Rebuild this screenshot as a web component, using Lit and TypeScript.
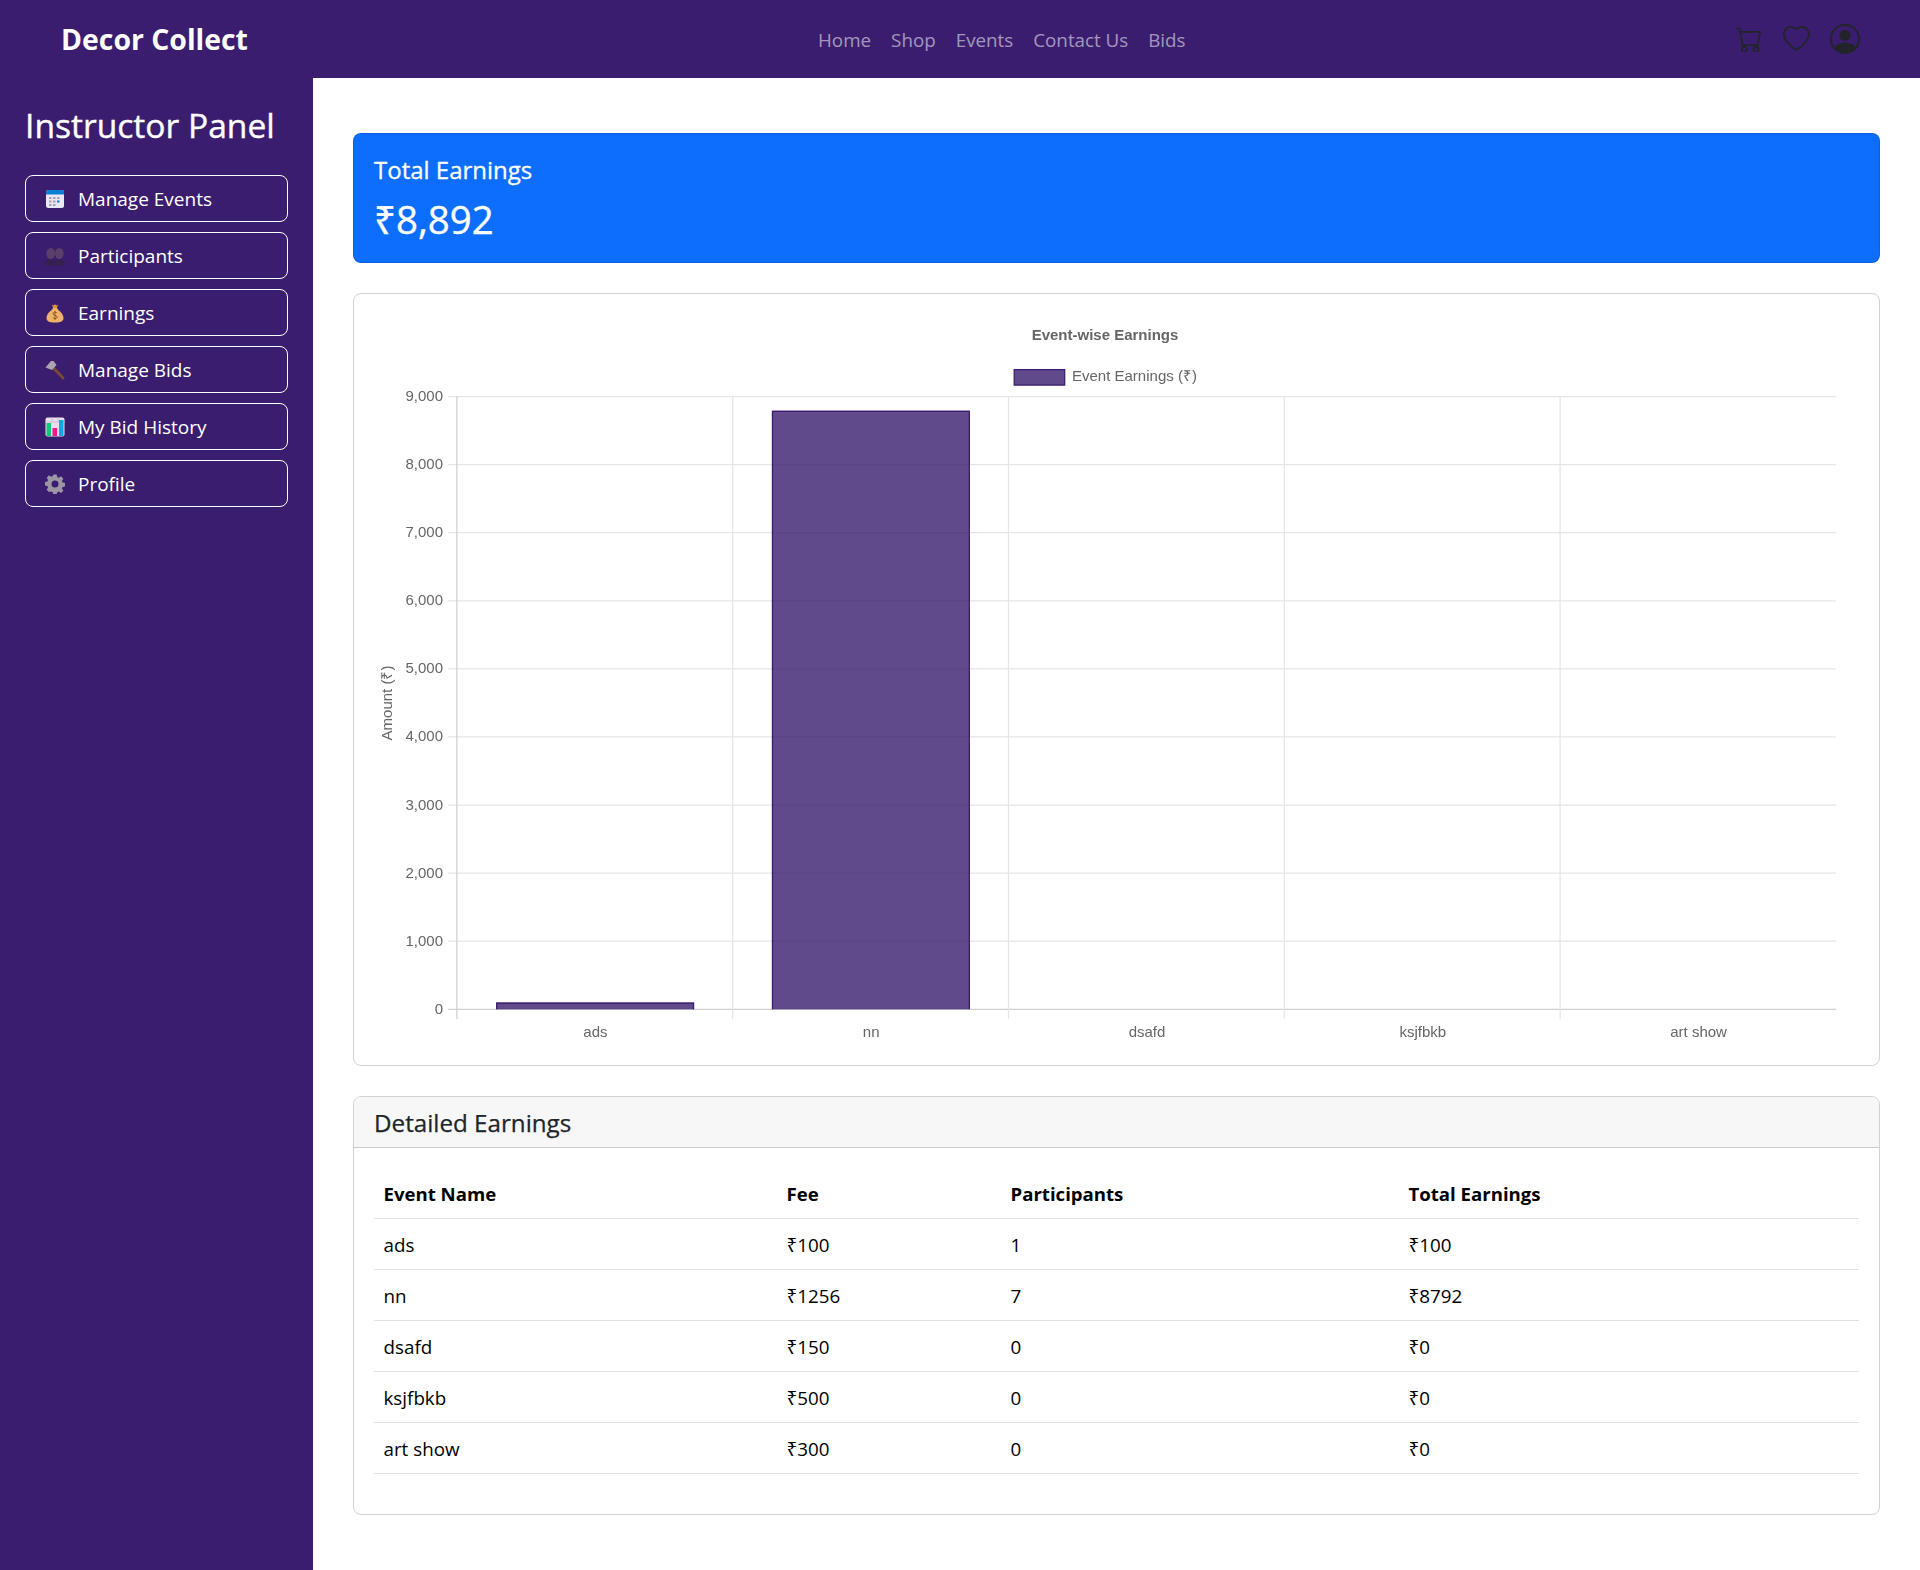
import { LitElement, html, svg, css } from 'lit';
import { customElement } from 'lit/decorators.js';

const PURPLE = '#3a1d6e';

const rows = [
  { name: 'ads', fee: 100, participants: 1, total: 100 },
  { name: 'nn', fee: 1256, participants: 7, total: 8792 },
  { name: 'dsafd', fee: 150, participants: 0, total: 0 },
  { name: 'ksjfbkb', fee: 500, participants: 0, total: 0 },
  { name: 'art show', fee: 300, participants: 0, total: 0 },
];

const icons = {
  calendar: svg`<rect x="1" y="1" width="18" height="18" rx="2.5" fill="#ece8f2"/>
    <path d="M1 5.500V3.500A2.500 2.500 0 0 1 3.500 1h13A2.500 2.500 0 0 1 19 3.500V5.500z" fill="#0a80d2"/>
    <g fill="#a5a1b4">
      <rect x="4" y="8" width="2.500" height="2"/><rect x="8" y="8" width="2.500" height="2"/><rect x="12" y="8" width="2.500" height="2"/>
      <rect x="4" y="11.500" width="2.500" height="2"/><rect x="8" y="11.500" width="2.500" height="2"/>
      <rect x="4" y="15" width="2.500" height="2"/><rect x="8" y="15" width="2.500" height="2"/>
    </g>
    <rect x="12" y="11.500" width="2.500" height="2" fill="#0a80d2"/>`,
  people: svg`<g fill="#5b3f68">
      <ellipse cx="5.700" cy="7.500" rx="4.300" ry="5.500"/><ellipse cx="14.300" cy="7.500" rx="4.300" ry="5.500"/>
    </g>
    <path d="M0 19.500v-2c0-2.500 2.200-3.800 5.700-4.300 1.700.3 3.100.8 4.300 1.600 1.200-.8 2.600-1.300 4.300-1.600 3.500.5 5.700 1.800 5.700 4.300v2z" fill="#35204f"/>`,
  bag: svg`<path d="M7 1.500l1.500 1 1.500-1.200 1.500 1.200 1.500-1-1 3.500H8z" fill="#d8963c"/>
    <path d="M8 5h4c1 2.500 6.500 5 6.500 10 0 3.300-2.500 4.500-8.500 4.500S1.500 18.300 1.500 15C1.500 10 7 7.500 8 5z" fill="#eeb26a"/>
    <path d="M12 10.200c-.4-.8-1.100-1.100-2-1.100-1.100 0-2 .6-2 1.600 0 2.200 4.100 1.200 4.100 3.300 0 1-.9 1.600-2.100 1.600-1 0-1.800-.4-2.200-1.200M10 8v9" fill="none" stroke="#8d5a1e" stroke-width="1"/>`,
  hammer: svg`<path d="M7 8.500l2-2 10 10.500a1.400 1.400 0 0 1-2 2z" fill="#7b4a33"/>
    <path d="M0.500 7.500L6 1h2.500L11.500 5 7 10z" fill="#a9a4ae"/>`,
  chart: svg`<rect x="0.500" y="0.500" width="19" height="19" rx="2" fill="#e6e0ec"/>
    <path d="M0.500 5h19M7 0.500v5M13 0.500v5" stroke="#c9c2d3" stroke-width="1"/>
    <rect x="1.500" y="6" width="4.500" height="13" fill="#10c878"/>
    <rect x="7.500" y="11" width="4.500" height="8" fill="#f5158c"/>
    <rect x="14" y="3" width="4.500" height="16" fill="#12a6e8"/>`,
  gear: svg`<path fill="#9b95a6" fill-rule="evenodd" d="M8.300.500h3.400l.5 2.600 1.600.7 2.200-1.500 2.400 2.400-1.500 2.200.7 1.600 2.600.5v3.400l-2.600.5-.7 1.600 1.500 2.200-2.400 2.400-2.200-1.500-1.600.7-.5 2.600H8.300l-.5-2.600-1.600-.7L4 18.100l-2.400-2.400 1.500-2.200-.7-1.600L-.2 11.400V8l2.600-.5.7-1.600L1.600 3.700 4 1.300l2.200 1.500 1.600-.7zM10 6.500a3.500 3.500 0 1 0 0 7 3.500 3.500 0 0 0 0-7z"/>`,
};

const sideItems = [
  { label: 'Manage Events', icon: icons.calendar },
  { label: 'Participants', icon: icons.people },
  { label: 'Earnings', icon: icons.bag },
  { label: 'Manage Bids', icon: icons.hammer },
  { label: 'My Bid History', icon: icons.chart },
  { label: 'Profile', icon: icons.gear },
];

// chart geometry, in page coordinates (the svg viewBox starts at the card corner)
const LEFT = 456.9;
const RIGHT = 1835.9;
const TOP = 396.5;
const ZERO = 1009.3;
const STEP = (RIGHT - LEFT) / rows.length;
const yFor = (v: number) => ZERO - ((ZERO - TOP) * v) / 9000;

function chart() {
  const ticks = [0, 1000, 2000, 3000, 4000, 5000, 6000, 7000, 8000, 9000];
  return html`<svg class="chart" viewBox="354 294 1525 771">
    ${ticks.map((t) => svg`
      <line x1="448" x2=${RIGHT} y1=${yFor(t)} y2=${yFor(t)} stroke=${t === 0 ? '#cfcfcf' : '#e6e6e6'} stroke-width="1.25"/>
      <text x="443" y=${yFor(t) + 4.5} text-anchor="end" class="tick">${t.toLocaleString('en-US')}</text>`)}
    ${rows.map((_, i) => svg`
      <line x1=${LEFT + STEP * i} x2=${LEFT + STEP * i} y1=${TOP} y2="1019" stroke=${i === 0 ? '#cfcfcf' : '#e6e6e6'} stroke-width="1.25"/>`)}
    ${rows.map((r, i) => {
      const x = LEFT + STEP * i + 39.2;
      const y = yFor(r.total);
      return r.total === 0 ? '' : svg`
        <rect x=${x} y=${y} width="198" height=${ZERO - y} fill="rgba(58,29,110,.8)"/>
        <path d="M${x + 0.6} ${ZERO}V${y + 0.6}H${x + 197.4}V${ZERO}" fill="none" stroke=${PURPLE} stroke-width="1.25"/>`;
    })}
    ${rows.map((r, i) => svg`
      <text x=${LEFT + STEP * (i + 0.5) + 0.6} y="1037" text-anchor="middle" class="tick">${r.name}</text>`)}
    <text x="1105" y="340" text-anchor="middle" class="title">Event-wise Earnings</text>
    <rect x="1014.200" y="369.600" width="50.500" height="15.500" fill="rgba(58,29,110,.8)" stroke=${PURPLE} stroke-width="1.25"/>
    <text x="1072" y="381" class="tick">Event Earnings (₹)</text>
    <text transform="translate(392 703) rotate(-90)" text-anchor="middle" class="tick">Amount (₹)</text>
  </svg>`;
}

@customElement('app-root')
export class AppRoot extends LitElement {
  static styles = css`
    :host {
      display: flex;
      flex-direction: column;
      min-height: 100vh;
      font-family: 'Open Sans', 'Noto Sans', sans-serif;
      font-size: 18.8px;
      color: #000;
      background: #fff;
    }
    .navbar {
      display: grid;
      grid-template-columns: 747px auto 1fr;
      align-items: center;
      height: 78px;
      padding: 0 60px 0 61px;
      background: #3a1d6e;
    }
    .brand {
      font-size: 28.4px;
      font-weight: 700;
      color: #fff;
    }
    .links {
      display: flex;
      gap: 20px;
      padding: 2px 0 0 10px;
      color: rgba(255, 255, 255, 0.55);
    }
    .actions {
      display: flex;
      justify-content: flex-end;
      align-items: center;
      gap: 20.5px;
      color: #212529;
    }
    .actions svg {
      display: block;
      width: 26.7px;
      height: 26.7px;
      fill: currentColor;
    }
    .actions svg.person {
      width: 30px;
      height: 30px;
    }
    .body {
      display: flex;
      flex: 1;
    }
    .sidebar {
      width: 313px;
      flex: none;
      box-sizing: border-box;
      padding: 26px 25px 0;
      background: #3a1d6e;
      color: #fff;
    }
    .sidebar h3 {
      margin: 0 0 29px;
      font-size: 33.6px;
      font-weight: 400;
      line-height: 42px;
      -webkit-text-stroke: 0.4px #fff;
    }
    .side-list {
      display: flex;
      flex-direction: column;
      gap: 10px;
    }
    .side-btn {
      display: flex;
      align-items: center;
      gap: 13px;
      height: 47px;
      box-sizing: border-box;
      padding-left: 19px;
      border: 1px solid #fff;
      border-radius: 8px;
      font-size: 19px;
    }
    .side-btn svg {
      width: 20px;
      height: 20px;
      flex: none;
    }
    .main {
      flex: 1;
      min-width: 0;
      padding: 55px 40px 0;
    }
    .total {
      height: 130px;
      box-sizing: border-box;
      padding: 21px 20px 0;
      margin-bottom: 30px;
      background: #0d6efd;
      border: 1px solid rgba(0, 0, 0, 0.125);
      border-radius: 8px;
      color: #fff;
    }
    .total h5 {
      margin: 0 0 10px;
      font-size: 24px;
      font-weight: 400;
      line-height: 30px;
      -webkit-text-stroke: 0.3px #fff;
    }
    .total h2 {
      margin: 0;
      font-size: 38.4px;
      font-weight: 400;
      line-height: 48px;
      -webkit-text-stroke: 0.4px #fff;
    }
    .card {
      box-sizing: border-box;
      margin-bottom: 30px;
      border: 1px solid rgba(0, 0, 0, 0.175);
      border-radius: 8px;
      overflow: hidden;
    }
    .chart {
      display: block;
      width: 100%;
      height: 771px;
      filter: blur(0.3px);
    }
    .chart text {
      font-family: 'Liberation Sans', Arial, sans-serif;
      font-size: 15px;
      fill: #666;
    }
    .chart text.title {
      font-weight: 700;
    }
    .card-head {
      height: 50px;
      box-sizing: content-box;
      padding: 0 20px;
      background: #f7f7f7;
      border-bottom: 1px solid rgba(0, 0, 0, 0.175);
      font-size: 24.2px;
      line-height: 52px;
      color: #212529;
      -webkit-text-stroke: 0.25px #212529;
    }
    .card-body {
      padding: 20px 20px 40px;
    }
    table {
      width: 100%;
      table-layout: fixed;
      border-collapse: collapse;
    }
    th,
    td {
      height: 48px;
      box-sizing: content-box;
      padding: 2px 10px 0 9.5px;
      text-align: left;
      border-bottom: 1px solid #dee2e6;
    }
    th {
      height: 50px;
      padding-top: 0;
      font-size: 18.6px;
      font-weight: 700;
    }
  `;

  render() {
    return html`
      <nav class="navbar">
        <div class="brand">Decor Collect</div>
        <div class="links">
          ${['Home', 'Shop', 'Events', 'Contact Us', 'Bids'].map((l) => html`<span>${l}</span>`)}
        </div>
        <div class="actions">
          <svg viewBox="0 0 16 16"><path d="M0 1.500A.5.5 0 0 1 .5 1H2a.5.5 0 0 1 .485.379L2.890 3H14.500a.5.5 0 0 1 .491.592l-1.500 8A.5.5 0 0 1 13 12H4a.5.5 0 0 1-.491-.408L2.010 3.607 1.610 2H.5a.5.5 0 0 1-.5-.5zM3.102 4l1.313 7h8.170l1.313-7H3.102zM5 12a2 2 0 1 0 0 4 2 2 0 0 0 0-4zm7 0a2 2 0 1 0 0 4 2 2 0 0 0 0-4zm-7 1a1 1 0 1 1 0 2 1 1 0 0 1 0-2zm7 0a1 1 0 1 1 0 2 1 1 0 0 1 0-2z"/></svg>
          <svg viewBox="0 0 16 16"><path d="m8 2.748-.717-.737C5.600.281 2.514.878 1.400 3.053c-.523 1.023-.641 2.500.314 4.385.920 1.815 2.834 3.989 6.286 6.357 3.452-2.368 5.365-4.542 6.286-6.357.955-1.886.838-3.362.314-4.385C13.486.878 10.400.280 8.717 2.010L8 2.748zM8 15C-7.333 4.868 3.279-3.040 7.824 1.143c.060.055.119.112.176.171a3.120 3.120 0 0 1 .176-.170C12.720-3.042 23.333 4.867 8 15z"/></svg>
          <svg class="person" viewBox="0 0 16 16"><path d="M11 6a3 3 0 1 1-6 0 3 3 0 0 1 6 0z"/><path fill-rule="evenodd" d="M0 8a8 8 0 1 1 16 0A8 8 0 0 1 0 8zm8-7a7 7 0 0 0-5.468 11.370C3.242 11.226 4.805 10 8 10s4.757 1.225 5.468 2.370A7 7 0 0 0 8 1z"/></svg>
        </div>
      </nav>
      <div class="body">
        <aside class="sidebar">
          <h3>Instructor Panel</h3>
          <div class="side-list">
            ${sideItems.map((s) => html`
              <div class="side-btn">
                <svg viewBox="0 0 20 20">${s.icon}</svg>
                <span>${s.label}</span>
              </div>`)}
          </div>
        </aside>
        <main class="main">
          <section class="total">
            <h5>Total Earnings</h5>
            <h2>₹8,892</h2>
          </section>
          <section class="card">${chart()}</section>
          <section class="card">
            <div class="card-head">Detailed Earnings</div>
            <div class="card-body">
              <table>
                <colgroup>
                  <col style="width:403px" /><col style="width:224px" /><col style="width:398px" /><col />
                </colgroup>
                <thead>
                  <tr><th>Event Name</th><th>Fee</th><th>Participants</th><th>Total Earnings</th></tr>
                </thead>
                <tbody>
                  ${rows.map((r) => html`
                    <tr>
                      <td>${r.name}</td>
                      <td>₹${r.fee}</td>
                      <td>${r.participants}</td>
                      <td>₹${r.total}</td>
                    </tr>`)}
                </tbody>
              </table>
            </div>
          </section>
        </main>
      </div>
    `;
  }
}
